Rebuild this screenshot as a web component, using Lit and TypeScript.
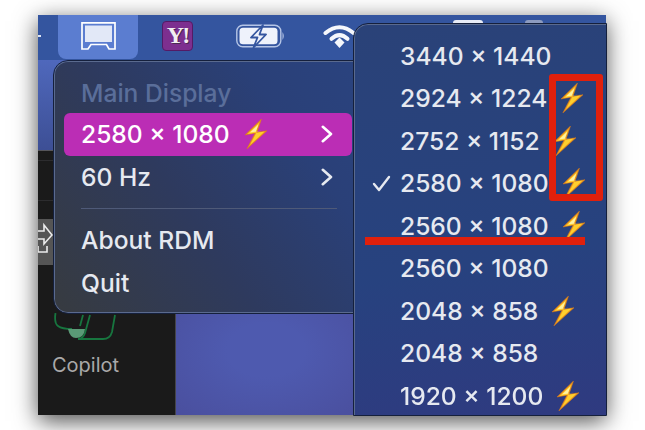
import { LitElement, html, css, svg } from 'lit';
import { customElement } from 'lit/decorators.js';

const bolt = html`<svg class="bolt" viewBox="0 0 22 30" width="22" height="30">
  <path d="M16.5 0 L0 16 L10 14.2 L1.8 30 L22 11.7 L12 13.3 Z" fill="#ef9a1c" stroke="#d9781a" stroke-width="0.5" stroke-linejoin="round" />
  <path d="M14.4 3.4 L2.6 15 L11.6 13.4 L5 26 L19.6 12.5 L10.3 13.9 Z" fill="#ffcf2e" />
  <path d="M13.4 5.4 L5 13.6 L13 12.2 L17 11.8 L11 12.2 Z" fill="#fff2a0" />
</svg>`;

const chevron = html`<svg class="chev" viewBox="0 0 12 18" width="12" height="18">
  <path d="M1.8 1.8 L10 9 L1.8 16.2" fill="none" stroke="currentColor" stroke-width="2.6" stroke-linecap="round" stroke-linejoin="round" />
</svg>`;

const modes = [
  { label: '3440 × 1440', bolt: false },
  { label: '2924 × 1224', bolt: true },
  { label: '2752 × 1152', bolt: true },
  { label: '2580 × 1080', bolt: true, checked: true },
  { label: '2560 × 1080', bolt: true },
  { label: '2560 × 1080', bolt: false },
  { label: '2048 × 858', bolt: true },
  { label: '2048 × 858', bolt: false },
  { label: '1920 × 1200', bolt: true },
];

@customElement('app-root')
export class AppRoot extends LitElement {
  static styles = css`
    :host {
      display: block;
      width: 645px;
      height: 430px;
      background: #fff;
      overflow: hidden;
      padding: 15px 39px 15px 38px;
      box-sizing: border-box;
      font-family: Inter, 'Liberation Sans', sans-serif;
    }
    .frame {
      height: 400px;
      box-shadow: 0 6px 22px rgba(0, 0, 0, 0.7);
    }
    .screen {
      position: relative;
      height: 400px;
      display: flex;
      flex-direction: column;
      background: #1a1a1a;
      filter: blur(0.5px);
    }
    .bar {
      height: 45px;
      flex: none;
      display: flex;
      align-items: flex-start;
      background: #34559f;
      position: relative;
    }
    .bar-dot {
      width: 3px;
      height: 2px;
      background: #dfe6f5;
      margin: 20px 17px 0 0;
    }
    .bar-active {
      width: 80px;
      height: 44px;
      border-radius: 0 0 8px 8px;
      background: #5b7dd0;
      padding: 7px 0 0 22px;
      box-sizing: border-box;
    }
    .bar-icon {
      flex: none;
      margin-top: 6px;
    }
    .yahoo {
      width: 31px;
      height: 30px;
      margin-left: 24px;
      border-radius: 4px;
      background: #7d2f8f;
      border: 1.5px solid #541a66;
      box-sizing: border-box;
      color: #f3eef3;
      font: bold 24px/27px 'Liberation Serif', serif;
      text-align: center;
      letter-spacing: -2px;
      text-shadow: 1px 1px 0 #4a2a52;
      overflow: hidden;
    }
    .battery {
      margin: 9px 0 0 43px;
    }
    .wifi {
      margin: 9px 0 0 38px;
    }
    .peek {
      position: absolute;
      top: 5px;
      height: 5px;
      border-radius: 3px 3px 0 0;
    }
    .desktop {
      flex: 1;
      display: flex;
      min-height: 0;
    }
    .sidebar {
      width: 138px;
      flex: none;
      position: relative;
      display: flex;
      flex-direction: column;
      justify-content: flex-end;
      background: #1a1a1a;
      border-right: 1px solid #45454a;
      box-sizing: border-box;
      padding: 0 0 38px 14px;
      color: #a9a9a9;
      font-size: 20px;
    }
    .sidebar-top {
      position: absolute;
      left: 0;
      top: 0;
      right: 0;
      height: 90px;
      background: linear-gradient(180deg, #4f68bc 0%, #3d4f95 100%);
      border-bottom: 1px solid #55555a;
    }
    .sidebar-line {
      position: absolute;
      left: 0;
      right: 0;
      height: 1px;
      background: #2c2c2e;
    }
    .share {
      position: absolute;
      left: 0;
      top: 159px;
      width: 15px;
      height: 46px;
      background: #555;
    }
    .copilot {
      position: absolute;
      left: 16px;
      top: 253px;
    }
    .wallpaper {
      flex: 1;
      background: radial-gradient(ellipse 130px 90px at 90px 290px, #4e5aaf 30%, #4a4f9e 100%);
    }
    .menu {
      position: absolute;
      box-sizing: border-box;
      color: #e6e9f0;
      font-size: 24.6px;
      font-weight: 450;
      border: 1px solid #5a6a8e;
      outline: 1px solid #15203c;
    }
    .main-menu {
      left: 16px;
      top: 46px;
      width: 310px;
      height: 252px;
      border-radius: 14px 0 0 14px;
      border-right: none;
      padding: 8.5px 0 0 9px;
      background: linear-gradient(55deg, #373b40 0%, #2e3a5e 42%, #2a4078 75%, #2a437f 100%);
    }
    .row {
      height: 42.5px;
      display: flex;
      align-items: center;
      padding: 0 19px 0 17px;
      width: 288px;
      box-sizing: border-box;
      border-radius: 6px;
      white-space: nowrap;
    }
    .row .chev {
      margin-left: auto;
    }
    .row .bolt {
      margin-left: 15px;
    }
    .title {
      color: #5a6e9a;
      padding-top: 3px;
    }
    .selected {
      background: #bb2db5;
      color: #fff;
    }
    .sep {
      height: 1px;
      width: 256px;
      margin: 10px 0 10px 17px;
      background: #4f5a78;
    }
    .sub-menu {
      left: 316px;
      top: 9px;
      width: 252px;
      height: 391px;
      border-radius: 14px 0 0 0;
      border-right: none;
      border-bottom: none;
      padding: 9.5px 0 0 45px;
      background: linear-gradient(170deg, #2a4278 0%, #27427f 60%, #2f3a80 100%);
    }
    .mode {
      position: relative;
      height: 42.5px;
      display: flex;
      align-items: center;
      white-space: nowrap;
    }
    .mode .bolt {
      margin-left: 14px;
    }
    .check {
      position: absolute;
      left: -28px;
      top: 13px;
    }
    .mark-box {
      position: absolute;
      left: 511px;
      top: 59px;
      width: 54px;
      height: 127px;
      box-sizing: border-box;
      border: 7px solid #e0200c;
      border-radius: 3px;
    }
    .mark-line {
      position: absolute;
      left: 327px;
      top: 222px;
      width: 220px;
      height: 8px;
      background: #e0200c;
    }
  `;

  private copilotIcon() {
    return html`<svg class="copilot" width="62" height="28" viewBox="54 313 62 28">
      ${svg`<path d="M55.5 313 Q54 323 58 326 Q62 329 72 329" fill="none" stroke="#17763f" stroke-width="1.8" />
      <path d="M83 315 L80 326" fill="none" stroke="#17763f" stroke-width="1.8" />
      <path d="M90 315 L85 333 Q83 339 78 339 L103 339 Q110 339 112 332 L115 315" fill="none" stroke="#17763f" stroke-width="1.8" />
      <path d="M68 329 H85 Q84 338 76 338 Q70 338 68 329 Z" fill="#5a9a76" />`}
    </svg>`;
  }

  render() {
    return html`
      <div class="frame">
        <div class="screen">
          <div class="bar">
            <div class="bar-dot"></div>
            <div class="bar-active">
              <svg width="36" height="29" viewBox="0 0 36 29">
                <path d="M2 0.8 H35 V27 H29 L26.5 22.5 H11 L8 27 H2 Z" fill="none" stroke="#fff" stroke-width="1.7" />
                <rect x="5" y="3.5" width="27" height="16.5" fill="#e2e8f7" />
              </svg>
            </div>
            <div class="bar-icon yahoo">Y!</div>
            <svg class="bar-icon battery" width="49" height="24" viewBox="0 0 49 24">
              <rect x="0.8" y="1.2" width="44" height="21.6" rx="6" fill="none" stroke="#b5c5e6" stroke-width="1.4" />
              <rect x="3.5" y="3.8" width="38" height="16.4" rx="3.5" fill="#eef2fb" />
              <path d="M46.5 8 Q49 12 46.5 16 Z" fill="#b5c5e6" />
              <path d="M27 1 L15 13.5 H21.5 L17.5 23.5 L30 10.5 H23.5 Z" fill="#eef2fb" stroke="#34559f" stroke-width="1.8" stroke-linejoin="round" />
            </svg>
            <svg class="bar-icon wifi" width="33" height="24" viewBox="0 0 33 24">
              <path d="M2.5 9 Q16.5 -2.5 30.5 9" fill="none" stroke="#f5f7fc" stroke-width="4" stroke-linecap="round" />
              <path d="M8.5 14.8 Q16.5 7.5 24.5 14.8" fill="none" stroke="#f5f7fc" stroke-width="4" stroke-linecap="round" />
              <path d="M11.5 18.5 L16.5 13.5 L21.5 18.5 L16.5 24 Z" fill="#f5f7fc" />
            </svg>
            <div class="peek" style="left:415px;width:30px;background:#e8ecf6"></div>
            <div class="peek" style="left:487px;width:18px;background:#8d9bbf"></div>
          </div>
          <div class="desktop">
            <div class="sidebar">
              <div class="sidebar-top"></div>
              <div class="sidebar-line" style="top:100px"></div>
              <div class="sidebar-line" style="top:140px"></div>
              <div class="share">
                <svg width="15" height="46" viewBox="0 0 15 46">
                  <path d="M0 12 H6 V6 L14 16 L6 25 V20 H0 M0 27 V33 H9 V27" fill="none" stroke="#ececec" stroke-width="1.6" />
                </svg>
              </div>
              ${this.copilotIcon()}
              <span>Copilot</span>
            </div>
            <div class="wallpaper"></div>
          </div>
          <div class="menu main-menu">
            <div class="row title">Main Display</div>
            <div class="row selected">2580 × 1080 ${bolt}${chevron}</div>
            <div class="row">60 Hz ${chevron}</div>
            <div class="sep"></div>
            <div class="row">About RDM</div>
            <div class="row">Quit</div>
          </div>
          <div class="menu sub-menu">
            ${modes.map(
              (m) => html`<div class="mode">
                ${m.checked
                  ? html`<svg class="check" width="19" height="17" viewBox="0 0 19 17">
                      <path d="M2 9 L7 15 L17 2" fill="none" stroke="currentColor" stroke-width="2.4" stroke-linecap="round" stroke-linejoin="round" />
                    </svg>`
                  : ''}
                <span>${m.label}</span>${m.bolt ? bolt : ''}
              </div>`,
            )}
          </div>
          <div class="mark-box"></div>
          <div class="mark-line"></div>
        </div>
      </div>
    `;
  }
}
